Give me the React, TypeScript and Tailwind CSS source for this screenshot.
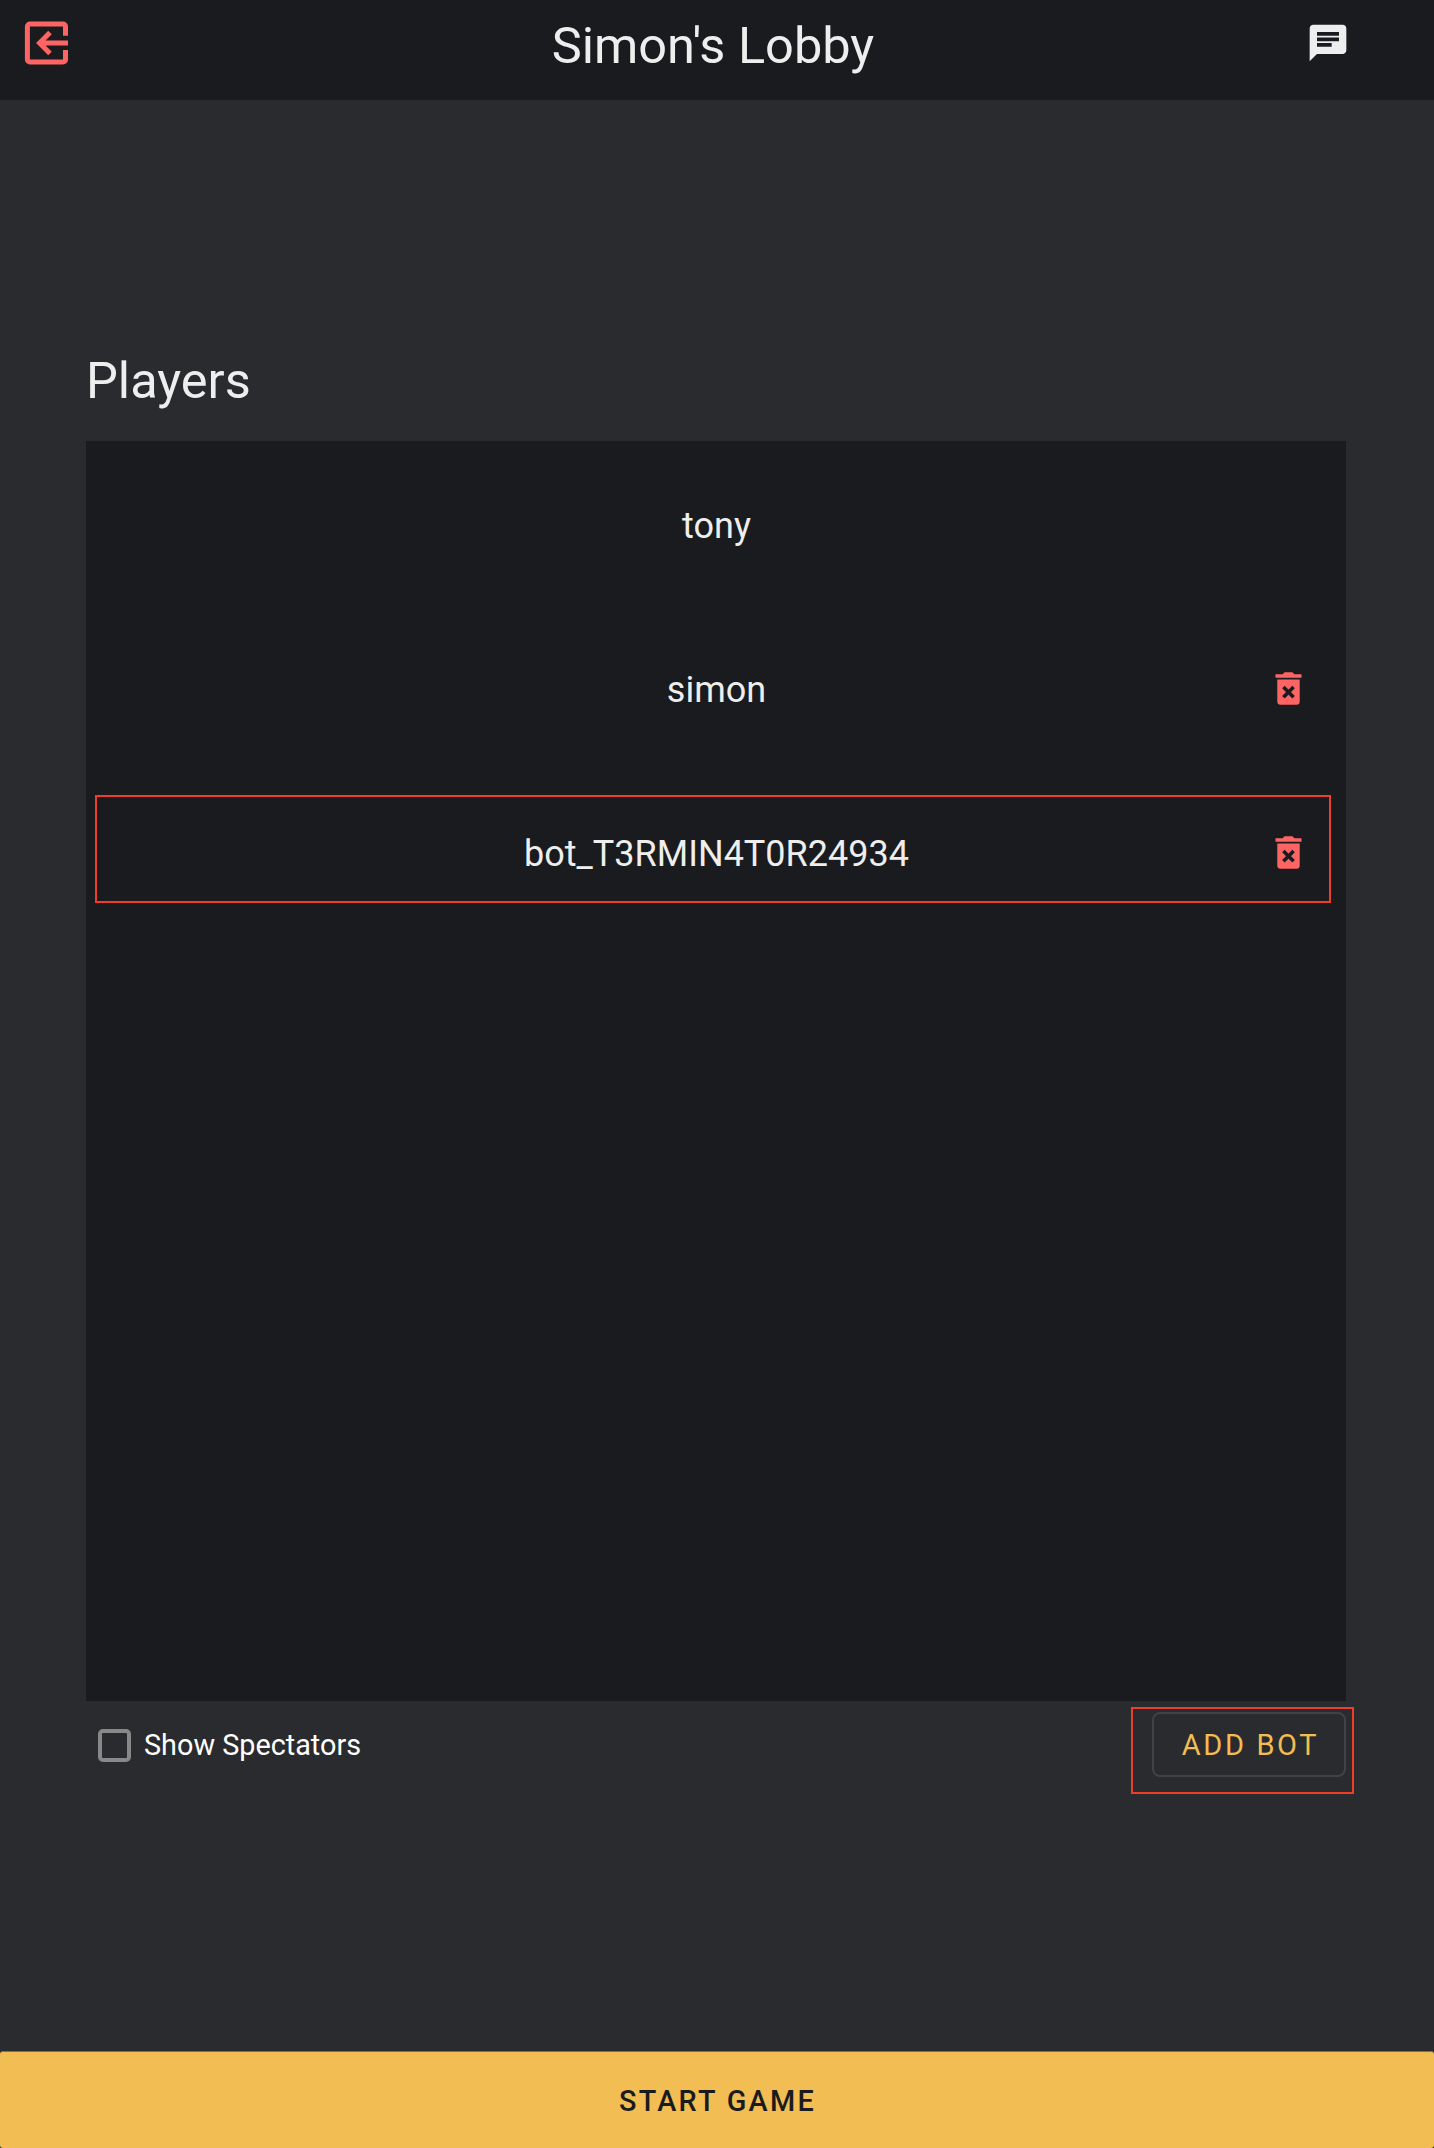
const players = [
  { name: "tony", removable: false, marked: false },
  { name: "simon", removable: true, marked: false },
  { name: "bot_T3RMIN4T0R24934", removable: true, marked: true },
];

function LeaveIcon() {
  return (
    <svg width="44" height="44" viewBox="0 0 44 44" fill="none" stroke="#ff6464" strokeWidth="5">
      <path d="M41.5 14.8V5.5a2.5 2.5 0 0 0-2.5-2.5H6A2.5 2.5 0 0 0 3.4 5.5v33A2.5 2.5 0 0 0 6 41h33a2.5 2.5 0 0 0 2.5-2.5V29" />
      <path d="M44 22H17M26 11.6L15.6 22 26 32.4" />
    </svg>
  );
}

function ChatIcon() {
  return (
    <svg width="44" height="44" viewBox="0 0 24 24" fill="#eeeeee">
      <path d="M20 2H4c-1.1 0-1.99.9-1.99 2L2 22l4-4h14c1.1 0 2-.9 2-2V4c0-1.1-.9-2-2-2zM6 9h12v2H6V9zm8 5H6v-2h8v2zm4-6H6V6h12v2z" />
    </svg>
  );
}

function TrashIcon() {
  return (
    <svg width="27" height="33" viewBox="0 0 27 33">
      <path
        fill="#ff6464"
        d="M.5 2.2H7.6L9.6.2H17.4L19.4 2.2H26.5V5.7H.5zM2.3 7.5H24.7V29.5a3.3 3.3 0 0 1-3.3 3.3H5.6a3.3 3.3 0 0 1-3.3-3.3z"
      />
      <path d="M8.4 15l10.2 10.2M18.6 15L8.4 25.2" stroke="#1a1b1e" strokeWidth="3.6" />
    </svg>
  );
}

export default function App() {
  return (
    <div className="flex h-[2148px] w-[1434px] flex-col bg-[#2a2b2e] font-[Roboto,sans-serif] text-[#eeeeee]">
      <header className="grid h-[100px] grid-cols-[84px_1fr_92px] items-start bg-[#1a1b1e]">
        <button className="ml-[24px] mt-[21px] w-[44px]">
          <LeaveIcon />
        </button>
        <h1 className="mt-[16px] text-center text-[50.5px] leading-[60px]">Simon's Lobby</h1>
        <button className="-ml-[36px] mt-[20.5px] w-[44px]">
          <ChatIcon />
        </button>
      </header>

      <main className="flex flex-1 flex-col pl-[86px] pr-[88px] pt-[251px]">
        <h2 className="h-[90px] text-[50.5px] leading-[60px]">Players</h2>
        <ul className="h-[1260px] w-[1260px] bg-[#1a1b1e] text-[36px]">
          {players.map((p) => (
            <li key={p.name} className="relative grid h-[164.4px] grid-cols-[115px_1fr_115px] items-center pt-[2px]">
              {p.marked && (
                <span className="absolute left-[9px] top-[25px] h-[108px] w-[1236px] border-2 border-[#f03d25]" />
              )}
              <span className="col-start-2 pl-px pt-[3px] text-center">{p.name}</span>
              {p.removable && (
                <button className="ml-[44px] w-[27px]">
                  <TrashIcon />
                </button>
              )}
            </li>
          ))}
        </ul>
        <div className="flex items-start justify-between">
          <label className="flex items-center pl-[12px] pt-[21px] text-[28.8px] leading-[45px] text-white">
            <span className="mr-[12px] h-[33px] w-[33px] rounded-[5px] border-4 border-[#888888]" />
            <span className="pl-px pt-px">Show Spectators</span>
          </label>
          <div className="relative mt-[11px]">
            <button className="h-[65px] w-[194px] rounded-[8px] border-2 border-[#414245] pl-[3px] pt-[3px] text-[29px] tracking-[2.6px] text-[#f2bd53]">
              ADD BOT
            </button>
            <span className="absolute -left-[21px] -top-[5px] h-[87px] w-[223px] border-2 border-[#f03d25]" />
          </div>
        </div>
      </main>

      <button className="h-[97px] rounded-[3px] border-t border-[#8a6f3d] bg-[#f2bd53] pl-px pt-[3px] text-[28.8px] font-medium tracking-[2.3px] text-[#1a1b1e]">
        START GAME
      </button>
    </div>
  );
}
